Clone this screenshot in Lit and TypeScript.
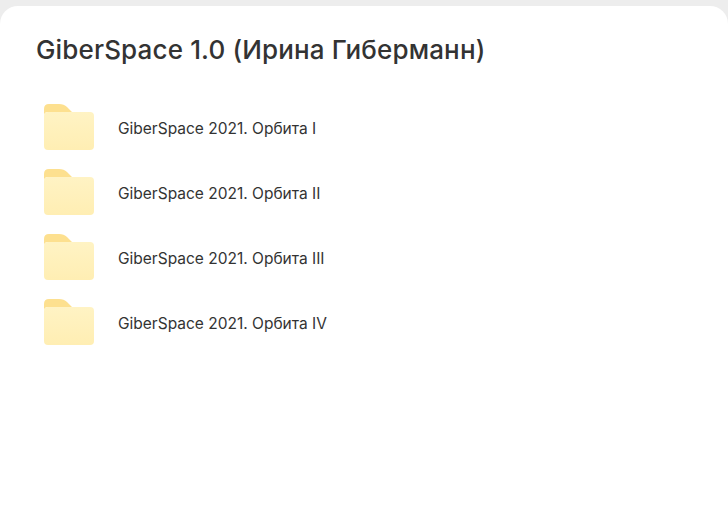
import { LitElement, html, css } from 'lit'
import { customElement } from 'lit/decorators.js'

const FOLDERS = [
  'GiberSpace 2021. Орбита I',
  'GiberSpace 2021. Орбита II',
  'GiberSpace 2021. Орбита III',
  'GiberSpace 2021. Орбита IV',
]

@customElement('app-root')
export class AppRoot extends LitElement {
  static styles = css`
    :host {
      display: block;
      height: 516px;
      overflow: hidden;
      background: #ededed;
      font-family: 'Inter', 'Noto Sans', sans-serif;
      color: #333;
    }

    .sheet {
      margin-top: 6px;
      height: 510px;
      box-sizing: border-box;
      padding: 26px 36px 0;
      background: #fff;
      border-radius: 18px 18px 0 0;
    }

    h1 {
      margin: 0 0 26px;
      font-size: 26px;
      line-height: 36px;
      font-weight: 500;
      letter-spacing: 0.15px;
    }

    .list {
      display: flex;
      flex-direction: column;
    }

    .row {
      display: flex;
      align-items: center;
      height: 65px;
      padding-left: 8px;
      gap: 24px;
      font-size: 15.5px;
    }

    .name {
      padding-top: 4px;
    }

    svg {
      display: block;
      flex: none;
    }
  `

  private folderIcon() {
    return html`
      <svg width="50" height="46" viewBox="0 0 50 46">
        <defs>
          <linearGradient id="body" x1="0" y1="0" x2="0" y2="1">
            <stop offset="0" stop-color="#fff3c4" />
            <stop offset="1" stop-color="#ffeeb3" />
          </linearGradient>
        </defs>
        <path d="M0 5 Q0 0 5 0 H15 Q20 0 23 3 L28 8 H4 Q0 8 0 12 Z" fill="#fde08f" />
        <rect x="0" y="8" width="50" height="38" rx="4" fill="url(#body)" />
      </svg>
    `
  }

  render() {
    return html`
      <div class="sheet">
        <h1>GiberSpace 1.0 (Ирина Гиберманн)</h1>
        <div class="list">
          ${FOLDERS.map(
            (name) => html`<div class="row">${this.folderIcon()}<span class="name">${name}</span></div>`
          )}
        </div>
      </div>
    `
  }
}
